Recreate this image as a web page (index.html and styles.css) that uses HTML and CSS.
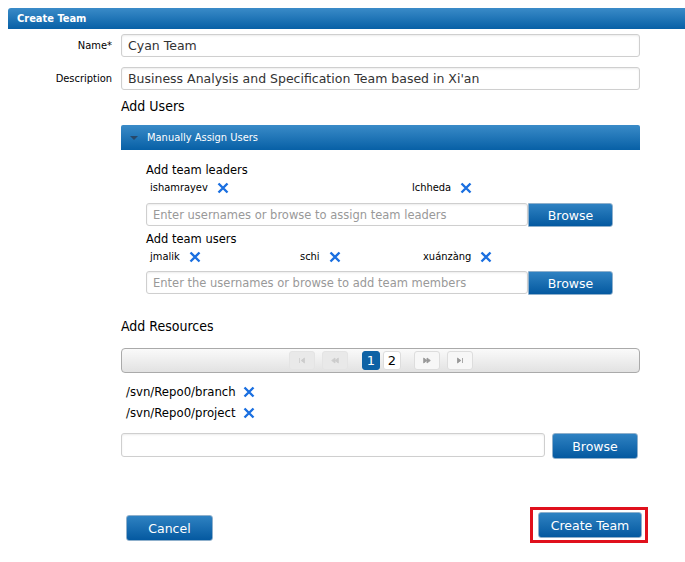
FILE: index.html
```html
<!DOCTYPE html>
<html lang="en">
<head>
    <meta charset="UTF-8">
    <title>Create Team</title>
    <link rel="stylesheet" href="styles.css">
</head>
<body>
<div class="panel">
    <div class="panel-title">Create Team</div>

    <div class="form-row first">
        <label class="form-label">Name*</label>
        <input type="text" class="text-input wide" value="Cyan Team">
    </div>
    <div class="form-row">
        <label class="form-label">Description</label>
        <input type="text" class="text-input wide" value="Business Analysis and Specification Team based in Xi'an">
    </div>

    <div class="content">
        <h2 class="section-title users-title">Add Users</h2>

        <div class="accordion">
            <div class="accordion-head">
                <span class="caret"></span>
                <span>Manually Assign Users</span>
            </div>
            <div class="accordion-body">
                <div class="sub-title">Add team leaders</div>
                <div class="tags leaders">
                    <span class="tag">ishamrayev <span class="remove"><svg viewBox="0 0 12 12"><path d="M1.5 1.5 L10.5 10.5 M10.5 1.5 L1.5 10.5"/></svg></span></span>
                    <span class="tag">lchheda <span class="remove"><svg viewBox="0 0 12 12"><path d="M1.5 1.5 L10.5 10.5 M10.5 1.5 L1.5 10.5"/></svg></span></span>
                </div>
                <div class="picker">
                    <input type="text" class="text-input" placeholder="Enter usernames or browse to assign team leaders">
                    <button class="btn browse">Browse</button>
                </div>

                <div class="sub-title second">Add team users</div>
                <div class="tags members">
                    <span class="tag">jmalik <span class="remove"><svg viewBox="0 0 12 12"><path d="M1.5 1.5 L10.5 10.5 M10.5 1.5 L1.5 10.5"/></svg></span></span>
                    <span class="tag">schi <span class="remove"><svg viewBox="0 0 12 12"><path d="M1.5 1.5 L10.5 10.5 M10.5 1.5 L1.5 10.5"/></svg></span></span>
                    <span class="tag">xuánzàng <span class="remove"><svg viewBox="0 0 12 12"><path d="M1.5 1.5 L10.5 10.5 M10.5 1.5 L1.5 10.5"/></svg></span></span>
                </div>
                <div class="picker second">
                    <input type="text" class="text-input" placeholder="Enter the usernames or browse to add team members">
                    <button class="btn browse">Browse</button>
                </div>
            </div>
        </div>

        <h2 class="section-title resources-title">Add Resources</h2>

        <div class="paginator">
            <span class="page-btn disabled"><svg viewBox="0 0 12 8"><path d="M3 1v6M9 1L5 4l4 3z"/></svg></span>
            <span class="page-btn disabled"><svg viewBox="0 0 12 8"><path d="M6 1L2 4l4 3zM10 1L6 4l4 3z"/></svg></span>
            <span class="page-num active">1</span>
            <span class="page-num">2</span>
            <span class="page-btn next"><svg viewBox="0 0 12 8"><path d="M2 1l4 3-4 3zM6 1l4 3-4 3z"/></svg></span>
            <span class="page-btn next"><svg viewBox="0 0 12 8"><path d="M3 1l4 3-4 3zM9 1v6"/></svg></span>
        </div>

        <div class="resources">
            <div class="resource">/svn/Repo0/branch <span class="remove"><svg viewBox="0 0 12 12"><path d="M1.5 1.5 L10.5 10.5 M10.5 1.5 L1.5 10.5"/></svg></span></div>
            <div class="resource">/svn/Repo0/project <span class="remove"><svg viewBox="0 0 12 12"><path d="M1.5 1.5 L10.5 10.5 M10.5 1.5 L1.5 10.5"/></svg></span></div>
        </div>

        <div class="picker resource-picker">
            <input type="text" class="text-input">
            <button class="btn browse">Browse</button>
        </div>
    </div>

    <div class="actions">
        <button class="btn cancel">Cancel</button>
        <span class="highlight"><button class="btn create">Create Team</button></span>
    </div>
</div>
</body>
</html>
```

FILE: styles.css
```css
body {
    margin: 8px 0 0 8px;
    font-family: "DejaVu Sans Condensed", "DejaVu Sans", sans-serif;
    font-size: 11px;
    color: #000;
    background: #fff;
}

.panel-title {
    height: 21px;
    line-height: 21px;
    padding-left: 9px;
    color: #fff;
    font-weight: bold;
    font-size: 11px;
    background: linear-gradient(#3a8bc8, #0760a6);
    border-radius: 3px 0 0 0;
}

.form-row {
    display: flex;
    align-items: center;
    margin-top: 10px;
}

.form-row.first {
    margin-top: 5px;
}

.form-label {
    width: 104px;
    text-align: right;
    margin-right: 9px;
}

.text-input {
    box-sizing: border-box;
    height: 23px;
    border: 1px solid #cfcfcf;
    border-radius: 3px;
    box-shadow: inset 0 1px 2px rgba(0, 0, 0, 0.08);
    padding: 0 6px;
    font-family: "DejaVu Sans", sans-serif;
    font-size: 12.5px;
    color: #333;
    outline: none;
}

.text-input::placeholder {
    color: #999;
}

.text-input.wide {
    width: 519px;
}

.content {
    margin-left: 113px;
    width: 519px;
}

.section-title {
    margin: 0;
    font-weight: normal;
    font-size: 14px;
    height: 20px;
    line-height: 20px;
}

.users-title {
    margin-top: 6px;
}

.accordion-head {
    margin-top: 9px;
    height: 25px;
    display: flex;
    align-items: center;
    color: #fff;
    font-size: 11px;
    background: linear-gradient(#3a8bc8, #0760a6);
    border-radius: 2px 2px 0 0;
}

.caret {
    width: 0;
    height: 0;
    margin: 0 9px 0 9px;
    border-left: 4px solid transparent;
    border-right: 4px solid transparent;
    border-top: 4px solid #27486a;
}

.accordion-body {
    padding: 12px 26px 0 25px;
}

.sub-title {
    font-family: "DejaVu Sans", sans-serif;
    font-size: 11.5px;
    height: 16px;
    line-height: 16px;
}

.sub-title.second {
    margin-top: 4px;
}

.tags {
    display: grid;
    height: 19px;
    align-items: center;
    padding-left: 4px;
}

.tags.leaders {
    grid-template-columns: 262px auto;
}

.tags.members {
    grid-template-columns: 150px 123px auto;
}

.tag {
    display: flex;
    align-items: center;
}

.remove {
    display: inline-flex;
    margin-left: 9px;
}

.remove svg {
    width: 12px;
    height: 12px;
    fill: none;
    stroke: #1a6fe0;
    stroke-width: 2.4;
}

.picker {
    display: flex;
    align-items: flex-start;
    margin-top: 6px;
}

.picker.second {
    margin-top: 5px;
}

.picker .text-input {
    width: 382px;
    font-size: 11.5px;
}

.btn {
    box-sizing: border-box;
    height: 26px;
    border: 1px solid #8fb0cc;
    border-radius: 3px;
    color: #fff;
    font-family: "DejaVu Sans", sans-serif;
    font-size: 12.5px;
    background: linear-gradient(#2f82c2, #0459a0);
    cursor: pointer;
    padding: 0;
}

.browse {
    width: 85px;
    height: 24px;
    border-radius: 0 3px 3px 0;
}

.resources-title {
    margin-top: 21px;
}

.paginator {
    box-sizing: border-box;
    margin-top: 12px;
    height: 25px;
    border: 1px solid #aaa;
    border-radius: 4px;
    background: linear-gradient(#fafafa, #e2e2e2);
    display: flex;
    align-items: center;
    padding-left: 167px;
}

.page-btn {
    box-sizing: border-box;
    width: 26px;
    height: 19px;
    margin-right: 7px;
    border: 1px solid #ddd;
    border-radius: 3px;
    display: flex;
    align-items: center;
    justify-content: center;
    background: #f7f7f7;
}

.page-btn svg {
    width: 10px;
    height: 7px;
    fill: #999;
    stroke: #999;
    stroke-width: 1;
}

.page-btn.disabled {
    background: #e9e9e9;
    border-color: #e4e4e4;
}

.page-btn.disabled svg {
    fill: #ccc;
    stroke: #ccc;
}

.page-num {
    box-sizing: border-box;
    width: 18px;
    height: 19px;
    line-height: 17px;
    text-align: center;
    font-family: "DejaVu Sans", sans-serif;
    font-size: 13px;
    border: 1px solid #ddd;
    border-radius: 3px;
    background: #fff;
    margin-right: 3px;
}

.page-num.active {
    margin-left: 7px;
    background: #0e62a5;
    border-color: #0e62a5;
    color: #fff;
}

.page-num + .page-btn {
    margin-left: 10px;
}

.resources {
    margin-top: 8px;
    padding-left: 5px;
}

.resource {
    display: flex;
    align-items: center;
    height: 21px;
    font-size: 13px;
}

.resource .remove {
    margin-left: 7px;
}

.resource-picker {
    margin-top: 10px;
}

.resource-picker .text-input {
    width: 424px;
    height: 24px;
    margin-right: 7px;
}

.resource-picker .browse {
    width: 86px;
    height: 26px;
    border-radius: 3px;
}

.actions {
    display: flex;
    align-items: flex-start;
    justify-content: space-between;
    width: 640px;
    margin-top: 48px;
}

.cancel {
    width: 87px;
    margin-left: 118px;
    margin-top: 8px;
}

.highlight {
    border: 3px solid #e0101c;
    padding: 2px 3px 2px 5px;
    display: flex;
}

.create {
    width: 104px;
}
```
